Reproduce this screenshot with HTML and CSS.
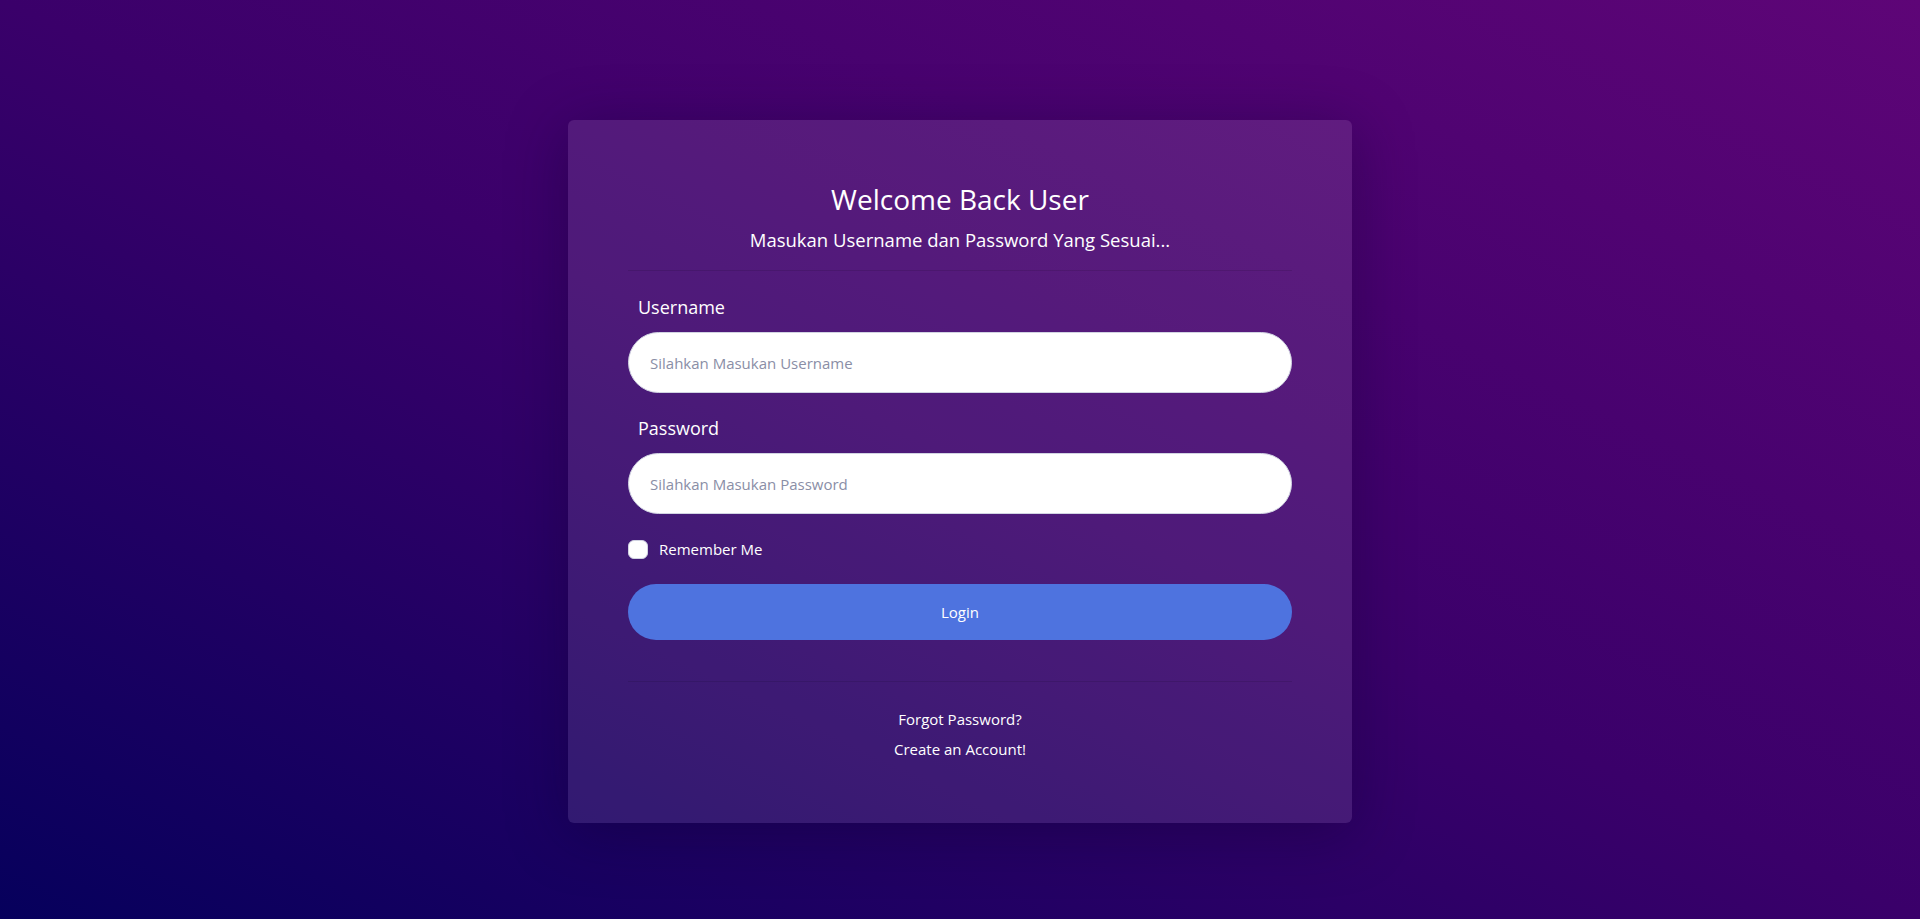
FILE: index.html
```html
<!DOCTYPE html>
<html lang="id">
<head>
<meta charset="utf-8">
<title>Login</title>
<link rel="stylesheet" href="styles.css">
</head>
<body>
<main class="page">
  <section class="card">
    <header class="card-head">
      <h1 class="title">Welcome Back User</h1>
      <p class="subtitle">Masukan Username dan Password Yang Sesuai...</p>
    </header>
    <hr class="divider">
    <form class="login-form">
      <label class="field-label" for="username">Username</label>
      <input class="field-input" id="username" type="text" placeholder="Silahkan Masukan Username">
      <label class="field-label" for="password">Password</label>
      <input class="field-input" id="password" type="password" placeholder="Silahkan Masukan Password">
      <label class="remember">
        <input class="remember-box" type="checkbox">
        <span class="remember-text">Remember Me</span>
      </label>
      <button class="login-btn" type="button">Login</button>
    </form>
    <hr class="divider divider-bottom">
    <nav class="links">
      <a class="link" href="#">Forgot Password?</a>
      <a class="link" href="#">Create an Account!</a>
    </nav>
  </section>
</main>
</body>
</html>
```

FILE: styles.css
```css
* { box-sizing: border-box; }

html, body {
  margin: 0;
  height: 100%;
}

body {
  font-family: "Open Sans", "Noto Sans", sans-serif;
  color: #ffffff;
  background: linear-gradient(to top right, #06005c 0%, #3a006a 50%, #5e0577 100%);
  overflow: hidden;
}

.page {
  display: flex;
  justify-content: center;
  padding-top: 120px;
  height: 100%;
}

.card {
  width: 784px;
  height: 703px;
  padding: 62px 60px 0;
  background: rgba(255, 255, 255, 0.1);
  border-radius: 6px;
  box-shadow: 0 10px 60px rgba(10, 0, 40, 0.35);
  display: flex;
  flex-direction: column;
}

.card-head {
  text-align: center;
}

.title {
  margin: 0;
  font-size: 28px;
  line-height: 34px;
  font-weight: 400;
}

.subtitle {
  margin: 11px 0 0;
  font-size: 18.5px;
  line-height: 26px;
}

.divider {
  margin: 17px 0 0;
  border: 0;
  border-top: 1px solid rgba(0, 0, 0, 0.1);
  height: 0;
}

.login-form {
  display: flex;
  flex-direction: column;
}

.field-label {
  font-size: 18px;
  line-height: 24px;
  padding-left: 10px;
  margin: 24px 0 13px;
}

.field-label + .field-input + .field-label {
  margin-top: 23px;
}

.field-input {
  height: 61px;
  border: 1px solid #d1d3e2;
  border-radius: 31px;
  padding: 0 21px;
  font-family: inherit;
  font-size: 15px;
  color: #6e707e;
  background: #ffffff;
  outline: none;
}

.field-input::placeholder {
  color: #8a8ea6;
}

.remember {
  display: flex;
  align-items: center;
  gap: 11px;
  margin-top: 25px;
  height: 20px;
}

.remember-box {
  appearance: none;
  -webkit-appearance: none;
  margin: 0;
  width: 20px;
  height: 19px;
  background: #ffffff;
  border: 1px solid #d1d3e2;
  border-radius: 6px;
}

.remember-text {
  font-size: 15px;
  line-height: 20px;
}

.login-btn {
  margin-top: 25px;
  height: 56px;
  border: 0;
  border-radius: 28px;
  background: #4e73df;
  color: #ffffff;
  font-family: inherit;
  font-size: 15px;
}

.divider-bottom {
  margin-top: 41px;
}

.links {
  display: flex;
  flex-direction: column;
  align-items: center;
  gap: 6px;
  margin-top: 25px;
}

.link {
  color: #ffffff;
  text-decoration: none;
  font-size: 15px;
  line-height: 24px;
}
```
